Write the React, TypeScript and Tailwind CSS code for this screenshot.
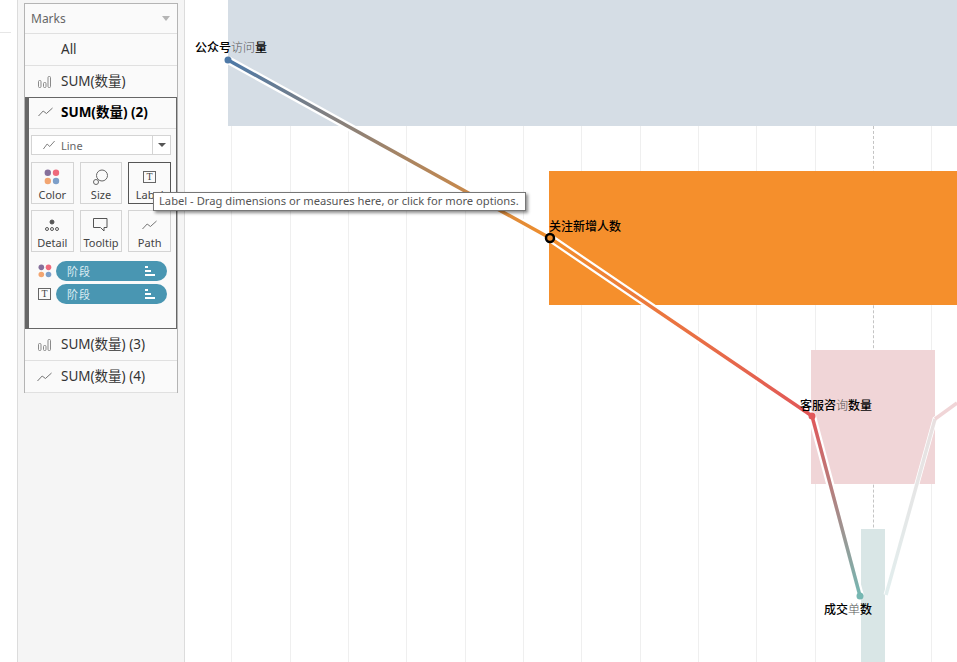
const gridXs = [231, 290, 348, 406, 465, 523, 581, 640, 698, 756, 815, 931];

function LineIcon({ width = 15 }: { width?: number }) {
  return (
    <svg width={width} height="10" viewBox="0 0 16 10" fill="none" preserveAspectRatio="none">
      <path d="M0.5 9 L5.5 4 L9 6.5 L15.5 1" stroke="#6f6f6f" strokeWidth="1" />
    </svg>
  );
}

function BarIcon() {
  return (
    <svg width="13" height="12" viewBox="0 0 13 12" fill="none">
      <rect x="0.5" y="4.5" width="2.5" height="7" rx="1" stroke="#8a8a8a" />
      <rect x="5.5" y="6.5" width="2.5" height="5" rx="1" stroke="#8a8a8a" />
      <rect x="10" y="0.5" width="2.5" height="11" rx="1" stroke="#8a8a8a" />
    </svg>
  );
}

function ColorDots({ size = 16 }: { size?: number }) {
  return (
    <svg width={size} height={size} viewBox="0 0 16 16">
      <circle cx="3.8" cy="3.8" r="3.2" fill="#86709b" />
      <circle cx="12" cy="3.8" r="3.2" fill="#ee6a7c" />
      <circle cx="3.8" cy="12" r="3.2" fill="#f2a571" />
      <circle cx="12" cy="12" r="3.2" fill="#7d9fc9" />
    </svg>
  );
}

function TextBox() {
  return (
    <div className="flex h-3 w-[13px] items-center justify-center border border-[#666] font-['Liberation_Serif',serif] text-[10px] font-normal leading-none text-[#444]">
      T
    </div>
  );
}

function SortIcon() {
  return (
    <svg width="10" height="10" viewBox="0 0 10 10" fill="#fff">
      <rect x="0" y="0" width="3" height="2" />
      <rect x="0" y="4" width="6" height="2" />
      <rect x="0" y="8" width="10" height="2" />
    </svg>
  );
}

function MarkRow({ icon, label }: { icon?: React.ReactNode; label: string }) {
  return (
    <div className="flex h-8 items-center border-b border-[#e0e0e0] bg-[#fafafa]">
      <div className="flex w-9 shrink-0 items-center justify-center pl-[2px]">{icon}</div>
      <span className="text-[13.5px] text-[#333]">{label}</span>
    </div>
  );
}

function CardButton({ icon, label, active }: { icon: React.ReactNode; label: string; active?: boolean }) {
  return (
    <div
      className={`flex h-[42px] flex-col items-center justify-between border pb-[1px] pt-[5px] ${
        active ? "border-[#555]" : "border-[#d4d4d4]"
      }`}
    >
      <div className="flex h-[18px] items-center justify-center">{icon}</div>
      <span className="text-[11px] leading-[14px] text-[#444]">{label}</span>
    </div>
  );
}

function Pill({ icon }: { icon: React.ReactNode }) {
  return (
    <div className="flex h-5 items-center">
      <div className="flex w-[25px] items-center justify-start pl-[7px]">{icon}</div>
      <div className="flex h-5 w-[111px] items-center justify-between rounded-full bg-[#4996b2] pl-[11px] pr-3">
        <span className="font-['Noto_Sans_CJK_SC',sans-serif] text-[11px] tracking-[1px] text-[#dcecf2]">阶段</span>
        <SortIcon />
      </div>
    </div>
  );
}

function MarksCard() {
  return (
    <div className="mt-[3px] w-[154px] self-start border border-[#b4b4b4] bg-[#fafafa]">
      <div className="flex h-[30px] items-center justify-between border-b border-[#e0e0e0] pl-[6px] pr-[7px]">
        <span className="text-[12px] text-[#666]">Marks</span>
        <div className="h-0 w-0 border-x-[4px] border-t-[5px] border-x-transparent border-t-[#b5b5b5]" />
      </div>
      <MarkRow label="All" />
      <MarkRow icon={<BarIcon />} label="SUM(数量)" />

      {/* selected card */}
      <div className="-mt-px h-[232px] border border-l-[4px] border-[#666] bg-[#fafafa]">
        <div className="flex h-[31px] items-center border-b border-[#e0e0e0] pb-[2px] font-bold">
          <div className="flex w-8 shrink-0 items-center justify-center"><LineIcon /></div>
          <span className="text-[13.5px] text-black">SUM(数量) (2)</span>
        </div>
        <div className="pl-[2px] pr-[5px] pt-[6px]">
          <div className="flex h-5 items-center justify-between border border-[#d4d4d4] bg-white">
            <div className="flex items-center gap-[6px] pl-[11px]">
              <LineIcon width={12} />
              <span className="pt-[2px] text-[11px] text-[#666]">Line</span>
            </div>
            <div className="flex h-full w-[18px] items-center justify-center border-l border-[#d4d4d4]">
              <div className="h-0 w-0 border-x-[4px] border-t-[4px] border-x-transparent border-t-[#555]" />
            </div>
          </div>
          <div className="mt-[7px] grid grid-cols-3 gap-[6px]">
            <CardButton icon={<ColorDots />} label="Color" />
            <CardButton
              icon={
                <svg width="15" height="16" viewBox="0 0 15 16" fill="none" stroke="#666">
                  <circle cx="9" cy="6.5" r="5.5" />
                  <circle cx="3" cy="13" r="2.5" fill="#fafafa" />
                </svg>
              }
              label="Size"
            />
            <CardButton icon={<TextBox />} label="Label" active />
            <CardButton
              icon={
                <svg width="14" height="12" viewBox="0 0 14 12" fill="none" stroke="#555">
                  <circle cx="7" cy="3" r="2" fill="#555" />
                  <circle cx="2" cy="10" r="1.5" />
                  <circle cx="7" cy="10" r="1.5" />
                  <circle cx="12" cy="10" r="1.5" />
                </svg>
              }
              label="Detail"
            />
            <CardButton
              icon={
                <svg width="15" height="14" viewBox="0 0 15 14" fill="none" stroke="#555">
                  <path d="M0.5 0.5 H14 V9.5 H11 V13 L7.5 9.5 H0.5 Z" />
                </svg>
              }
              label="Tooltip"
            />
            <CardButton icon={<LineIcon />} label="Path" />
          </div>
          <div className="mt-[9px] flex flex-col gap-[3px]">
            <Pill icon={<ColorDots size={14} />} />
            <Pill icon={<TextBox />} />
          </div>
        </div>
      </div>

      <MarkRow icon={<BarIcon />} label="SUM(数量) (3)" />
      <div className="-mb-px">
        <MarkRow icon={<LineIcon />} label="SUM(数量) (4)" />
      </div>
    </div>
  );
}

function ChartLines() {
  return (
    <svg className="absolute left-0 top-0" width="957" height="662" fill="none">
      <defs>
        <linearGradient id="seg1" gradientUnits="userSpaceOnUse" x1="228" y1="60" x2="550" y2="238">
          <stop offset="0" stopColor="#4e79a7" />
          <stop offset="1" stopColor="#f28e2b" />
        </linearGradient>
        <linearGradient id="seg2" gradientUnits="userSpaceOnUse" x1="550" y1="238" x2="812" y2="416">
          <stop offset="0" stopColor="#f28e2b" />
          <stop offset="1" stopColor="#e15759" />
        </linearGradient>
        <linearGradient id="seg3" gradientUnits="userSpaceOnUse" x1="812" y1="416" x2="860" y2="596">
          <stop offset="0" stopColor="#e15759" />
          <stop offset="1" stopColor="#76b7b2" />
        </linearGradient>
        <linearGradient id="seg4" gradientUnits="userSpaceOnUse" x1="886" y1="595" x2="935" y2="419">
          <stop offset="0" stopColor="#e2eeee" />
          <stop offset="1" stopColor="#e8e0e0" />
        </linearGradient>
      </defs>

      {/* white halo under the line */}
      <path d="M228 60 L550 238 L812 416 L860 596" stroke="#fff" strokeWidth="8" />
      <path d="M886 595 L935 419 L957 403" stroke="#fff" strokeWidth="5" />

      <line x1="228" y1="60" x2="550" y2="238" stroke="url(#seg1)" strokeWidth="3.5" />
      <line x1="550" y1="238" x2="812" y2="416" stroke="url(#seg2)" strokeWidth="3.5" />
      <line x1="812" y1="416" x2="860" y2="596" stroke="url(#seg3)" strokeWidth="3.5" />
      <line x1="886" y1="595" x2="935" y2="419" stroke="url(#seg4)" strokeWidth="3.5" />
      <line x1="935" y1="419" x2="957" y2="403" stroke="#f0d5d7" strokeWidth="3.5" />

      <circle cx="228" cy="60" r="3.5" fill="#4e79a7" />
      <circle cx="812" cy="416" r="3.5" fill="#e15759" />
      <circle cx="860" cy="596" r="3.5" fill="#76b7b2" />
      <circle cx="550" cy="238" r="4" fill="#f28e2b" stroke="#000" strokeWidth="2.5" />
    </svg>
  );
}

function ChartLabel({ x, y, before, faint, after }: { x: number; y: number; before: string; faint?: string; after?: string }) {
  return (
    <div
      className="absolute whitespace-nowrap font-['Noto_Sans_CJK_SC',sans-serif] text-[12px] font-medium leading-[14px] text-black"
      style={{ left: x, top: y }}
    >
      {before}
      {faint && <span className="font-light text-[#555]">{faint}</span>}
      {after}
    </div>
  );
}

function Chart() {
  return (
    <div className="relative h-full flex-1 overflow-hidden bg-white">
      <div className="absolute inset-y-0 left-[-185px] w-[957px]">
        {gridXs.map((x) => (
          <div key={x} className="absolute bottom-0 top-[126px] w-px bg-[#efefef]" style={{ left: x }} />
        ))}
        <div className="absolute bottom-0 left-[873px] top-[126px] border-l border-dashed border-[#c4c4c4]" />

        <div className="absolute left-[228px] top-0 h-[126px] w-[729px] bg-[#d5dde5]" />
        <div className="absolute left-[549px] top-[171px] h-[134px] w-[408px] bg-[#f58f2c]" />
        <div className="absolute left-[811px] top-[350px] h-[134px] w-[124px] bg-[#f0d5d7]" />
        <div className="absolute left-[861px] top-[529px] h-[133px] w-[24px] bg-[#d9e6e6]" />

        <ChartLines />

        <ChartLabel x={195} y={40} before="公众号" faint="访问" after="量" />
        <ChartLabel x={549} y={219} before="关注新增人数" />
        <ChartLabel x={800} y={398} before="客服咨" faint="询" after="数量" />
        <ChartLabel x={824} y={602} before="成交" faint="单" after="数" />
      </div>
    </div>
  );
}

export default function App() {
  return (
    <div className="relative flex h-[662px] w-[957px] overflow-hidden bg-white font-['Noto_Sans','Noto_Sans_CJK_SC',sans-serif]">
      {/* left sliver of the neighbouring pane */}
      <div className="h-full w-[17px] shrink-0 pt-8">
        <div className="h-px w-[11px] bg-[#e6e6e6]" />
      </div>

      <div className="flex h-full w-[168px] shrink-0 border-x border-[#dcdcdc] bg-[#f5f5f5] pl-[6px]">
        <MarksCard />
      </div>

      <Chart />

      {/* tooltip */}
      <div className="absolute left-[153px] top-[192px] flex h-[19px] w-[373px] items-center whitespace-nowrap border border-[#777] bg-white pl-[5px] text-[11.2px] text-[#555] shadow-[2px_2px_3px_rgba(0,0,0,0.45)]">
        Label - Drag dimensions or measures here, or click for more options.
      </div>
    </div>
  );
}
